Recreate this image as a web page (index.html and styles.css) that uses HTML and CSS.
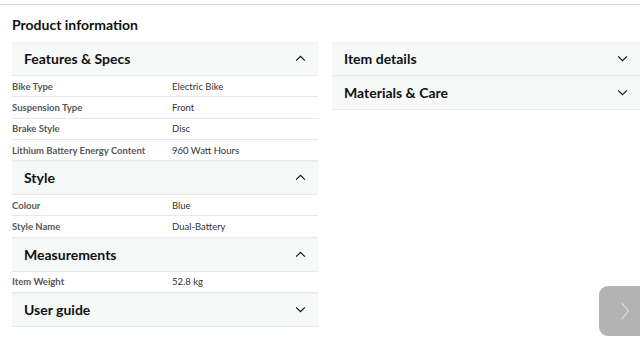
FILE: index.html
```html
<!DOCTYPE html>
<html>
<head>
    <title>Product information</title>
    <link rel="stylesheet" href="styles.css">
</head>
<body>
    <div class="topbar"></div>

    <h2 class="page-title">Product information</h2>

    <div class="columns">
        <div class="column">
            <div class="section-head">
                <span>Features &amp; Specs</span>
                <svg class="chev" viewBox="0 0 12 8"><path d="M1 6.5 L6 1.5 L11 6.5"/></svg>
            </div>
            <div class="row"><span class="label">Bike Type</span><span class="value">Electric Bike</span></div>
            <div class="row"><span class="label">Suspension Type</span><span class="value">Front</span></div>
            <div class="row"><span class="label">Brake Style</span><span class="value">Disc</span></div>
            <div class="row"><span class="label">Lithium Battery Energy Content</span><span class="value">960 Watt Hours</span></div>

            <div class="section-head">
                <span>Style</span>
                <svg class="chev" viewBox="0 0 12 8"><path d="M1 6.5 L6 1.5 L11 6.5"/></svg>
            </div>
            <div class="row"><span class="label">Colour</span><span class="value">Blue</span></div>
            <div class="row"><span class="label">Style Name</span><span class="value">Dual-Battery</span></div>

            <div class="section-head">
                <span>Measurements</span>
                <svg class="chev" viewBox="0 0 12 8"><path d="M1 6.5 L6 1.5 L11 6.5"/></svg>
            </div>
            <div class="row"><span class="label">Item Weight</span><span class="value">52.8 kg</span></div>

            <div class="section-head">
                <span>User guide</span>
                <svg class="chev" viewBox="0 0 12 8"><path d="M1 1.5 L6 6.5 L11 1.5"/></svg>
            </div>
        </div>

        <div class="column">
            <div class="section-head">
                <span>Item details</span>
                <svg class="chev" viewBox="0 0 12 8"><path d="M1 1.5 L6 6.5 L11 1.5"/></svg>
            </div>
            <div class="section-head">
                <span>Materials &amp; Care</span>
                <svg class="chev" viewBox="0 0 12 8"><path d="M1 1.5 L6 6.5 L11 1.5"/></svg>
            </div>
        </div>
    </div>

    <div class="next-btn">
        <svg viewBox="0 0 12 24"><path d="M2 2 L10 12 L2 22"/></svg>
    </div>
</body>
</html>
```

FILE: styles.css
```css
body {
    margin: 0;
    font-family: Lato, "Noto Sans", sans-serif;
    background: white;
    color: #0f1111;
    overflow: hidden;
}

.topbar {
    height: 4px;
    border-bottom: 1px solid #d5d9d9;
}

.page-title {
    font-size: 14px;
    font-weight: bold;
    line-height: 20px;
    margin: 10px 0 7px 12px;
}

.columns {
    display: grid;
    grid-template-columns: 306px 1fr;
    column-gap: 14px;
    padding-left: 12px;
}

.section-head {
    height: 33px;
    display: flex;
    align-items: center;
    justify-content: space-between;
    padding: 0 12px;
    background: #f7f8f8;
    border-bottom: 1px solid #e7e9e9;
    box-shadow: inset 0 1px 2px rgba(0,0,0,0.03);
    font-size: 14px;
    font-weight: bold;
}

.chev {
    width: 11px;
    height: 7px;
    fill: none;
    stroke: #0f1111;
    stroke-width: 1.3;
}

.row {
    display: flex;
    align-items: center;
    height: 21.3px;
    box-sizing: border-box;
    border-bottom: 1px solid #e7e9e9;
    font-size: 9.5px;
}

.label {
    width: 160px;
    font-weight: bold;
    color: #565959;
}

.value {
    color: #333;
}

.next-btn {
    position: absolute;
    left: 599px;
    top: 286px;
    width: 60px;
    height: 50px;
    border-radius: 9px;
    background: #b3b3b3;
    display: flex;
    align-items: center;
    padding-left: 21px;
    box-sizing: border-box;
}

.next-btn svg {
    width: 10px;
    height: 22px;
    fill: none;
    stroke: #d9d9d9;
    stroke-width: 1.5;
}
```
